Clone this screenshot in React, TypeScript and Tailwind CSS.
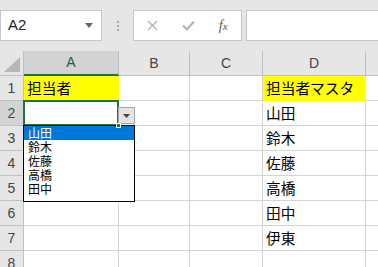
import React from "react";

const jp = "font-['Noto_Sans_CJK_JP','Noto_Sans',sans-serif]";

type Col = { key: string; w: string };

const cols: Col[] = [
  { key: "A", w: "w-[95px]" },
  { key: "B", w: "w-[71px]" },
  { key: "C", w: "w-[73px]" },
  { key: "D", w: "w-[103px]" },
];

const master = ["山田", "鈴木", "佐藤", "高橋", "田中", "伊東"];
const listItems = ["山田", "鈴木", "佐藤", "高橋", "田中"];

function cellValue(row: number, col: string): string {
  if (row === 1 && col === "A") return "担当者";
  if (row === 1 && col === "D") return "担当者マスタ";
  if (col === "D" && row >= 2 && row <= 7) return master[row - 2];
  return "";
}

function FormulaBar() {
  return (
    <div className="flex h-[51px] items-start bg-[#e6e6e6] pt-[10px]">
      <div className="flex h-[31px] w-[102px] items-center justify-between border border-[#c6c6c6] bg-white pl-[7px] pr-[8px]">
        <span className="font-['Liberation_Sans',sans-serif] text-[15px] text-[#222]">A2</span>
        <svg width="8" height="5" viewBox="0 0 8 5">
          <path d="M0 0h8L4 5z" fill="#666" />
        </svg>
      </div>
      <div className="flex h-[31px] w-[31px] flex-col items-center justify-center gap-[2px]">
        <span className="h-[2px] w-[2px] bg-[#a8a8a8]" />
        <span className="h-[2px] w-[2px] bg-[#a8a8a8]" />
        <span className="h-[2px] w-[2px] bg-[#a8a8a8]" />
      </div>
      <div className="flex h-[31px] w-[109px] items-center border border-[#c6c6c6] bg-white">
        <div className="flex w-[36px] justify-center pl-[2px]">
          <svg width="11" height="11" viewBox="0 0 11 11">
            <path d="M1 1l9 9M10 1l-9 9" stroke="#b4b4b4" strokeWidth="1.4" />
          </svg>
        </div>
        <div className="flex w-[36px] justify-center pl-[2px]">
          <svg width="13" height="11" viewBox="0 0 13 11">
            <path d="M1 5.5l4 4 7-8" stroke="#b4b4b4" strokeWidth="2" fill="none" />
          </svg>
        </div>
        <div className="flex w-[36px] justify-center">
          <span className="font-['Liberation_Serif',serif] text-[14px] italic text-[#555]">
            f<span className="text-[11px]">x</span>
          </span>
        </div>
      </div>
      <div className="ml-[4px] h-[31px] flex-1 border border-r-0 border-[#c6c6c6] bg-white" />
    </div>
  );
}

function HeaderRow() {
  return (
    <div className="flex h-[25px]">
      <div className="relative w-[24px] shrink-0 border-r border-b border-[#c0c0c0] bg-[#e6e6e6]">
        <svg className="absolute bottom-[3px] right-[3px]" width="16" height="15" viewBox="0 0 16 15">
          <path d="M16 0v15H0z" fill="#b6b6b6" />
        </svg>
      </div>
      {cols.map((c) => {
        const sel = c.key === "A";
        return (
          <div
            key={c.key}
            className={`${c.w} flex shrink-0 items-center justify-center border-r font-['Liberation_Sans',sans-serif] text-[14px] ${
              sel
                ? "border-b-2 border-r-[#bcbcbc] border-b-[#217346] bg-[#d3d3d3] text-[#1e5c3a]"
                : "border-b border-[#c0c0c0] bg-[#e6e6e6] text-[#444]"
            }`}
          >
            {c.key}
          </div>
        );
      })}
      <div className="flex-1 border-b border-[#c0c0c0] bg-[#e6e6e6]" />
    </div>
  );
}

function DropdownList() {
  return (
    <div className="absolute left-[-1px] top-[24px] z-20 h-[77px] w-[112px] border border-black bg-white">
      {listItems.map((name, i) => (
        <div
          key={name}
          className={`h-[14px] pl-[4px] text-[12px] leading-[14px] ${jp} ${
            i === 0 ? "bg-[#0078d7] text-white" : "text-black"
          }`}
        >
          {name}
        </div>
      ))}
    </div>
  );
}

function Row({ n }: { n: number }) {
  const selRow = n === 2;
  return (
    <div className="flex h-[25px]">
      <div
        className={`flex w-[24px] shrink-0 items-center justify-center border-r border-b border-[#c0c0c0] font-['Liberation_Sans',sans-serif] text-[14px] ${
          selRow ? "bg-[#d3d3d3] text-[#1e5c3a]" : "bg-[#e6e6e6] text-[#444]"
        }`}
      >
        {n}
      </div>
      {cols.map((c) => {
        const v = cellValue(n, c.key);
        const yellow = n === 1 && (c.key === "A" || c.key === "D");
        const active = selRow && c.key === "A";
        return (
          <div
            key={c.key}
            className={`${c.w} relative flex shrink-0 items-center border-r border-b pl-[3px] text-[14.7px] text-black ${jp} ${
              yellow ? "border-[#ffff00] bg-[#ffff00]" : "border-[#d4d4d4] bg-white"
            }`}
          >
            {v}
            {active && (
              <>
                <div className="pointer-events-none absolute inset-[-1px_-1px_-1px_-1px] z-10 border-2 border-[#217346]" />
                <div className="absolute bottom-[-3px] right-[-3px] z-30 h-[5px] w-[5px] border border-white bg-[#217346]" />
                <div className="absolute left-[94px] top-[6px] z-20 flex h-[17px] w-[17px] items-center justify-center border border-[#a6a6a6] bg-[#e3e3e3]">
                  <svg width="7" height="4" viewBox="0 0 7 4">
                    <path d="M0 0h7L3.5 4z" fill="#444" />
                  </svg>
                </div>
                <DropdownList />
              </>
            )}
          </div>
        );
      })}
      <div className="flex-1 border-b border-[#d4d4d4] bg-white" />
    </div>
  );
}

export default function App() {
  return (
    <div className="h-[267px] w-[378px] overflow-hidden bg-white">
      <FormulaBar />
      <HeaderRow />
      {[1, 2, 3, 4, 5, 6, 7, 8].map((n) => (
        <Row key={n} n={n} />
      ))}
    </div>
  );
}
